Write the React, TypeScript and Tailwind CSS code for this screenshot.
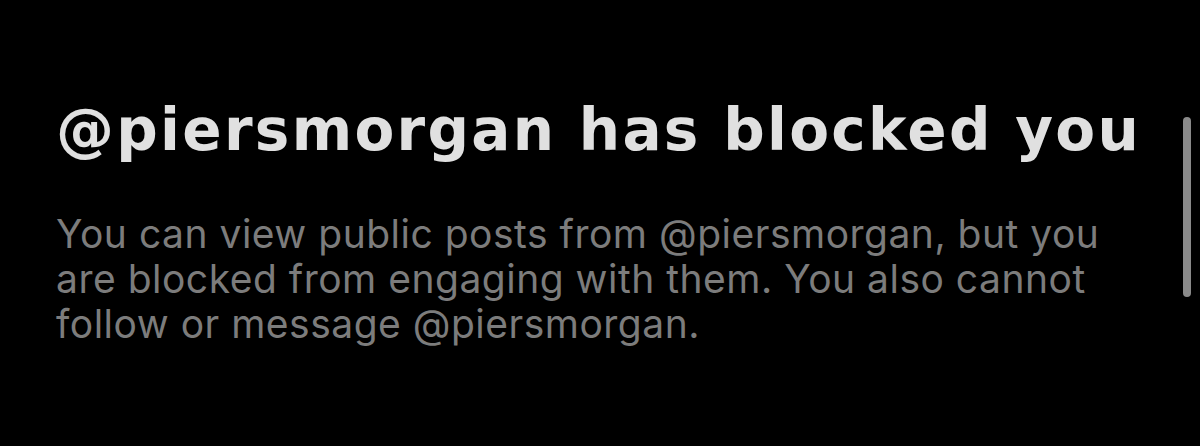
export default function App(): React.JSX.Element {
  return (
    <div className="relative h-[446px] w-[1200px] overflow-hidden bg-black">
      <div className="flex flex-col pl-[56px] pt-[96px]">
        <h1 className="text-[58px] font-bold leading-[68px] tracking-[2.3px] text-[#e0e0e0] [font-family:'DejaVu_Sans',Verdana,sans-serif]">
          @piersmorgan has blocked you
        </h1>
        <p className="mt-[47px] w-[1080px] text-[39px] leading-[45px] tracking-[0.5px] text-[#7c7c7c] [font-family:Inter,sans-serif]">
          You can view public posts from @piersmorgan, but you are blocked from engaging with them. You also cannot
          follow or message @piersmorgan.
        </p>
      </div>
      {/* scroll indicator */}
      <div className="absolute left-[1183px] top-[117px] h-[180px] w-[8px] rounded-full bg-[#8a8a8a]" />
    </div>
  )
}
